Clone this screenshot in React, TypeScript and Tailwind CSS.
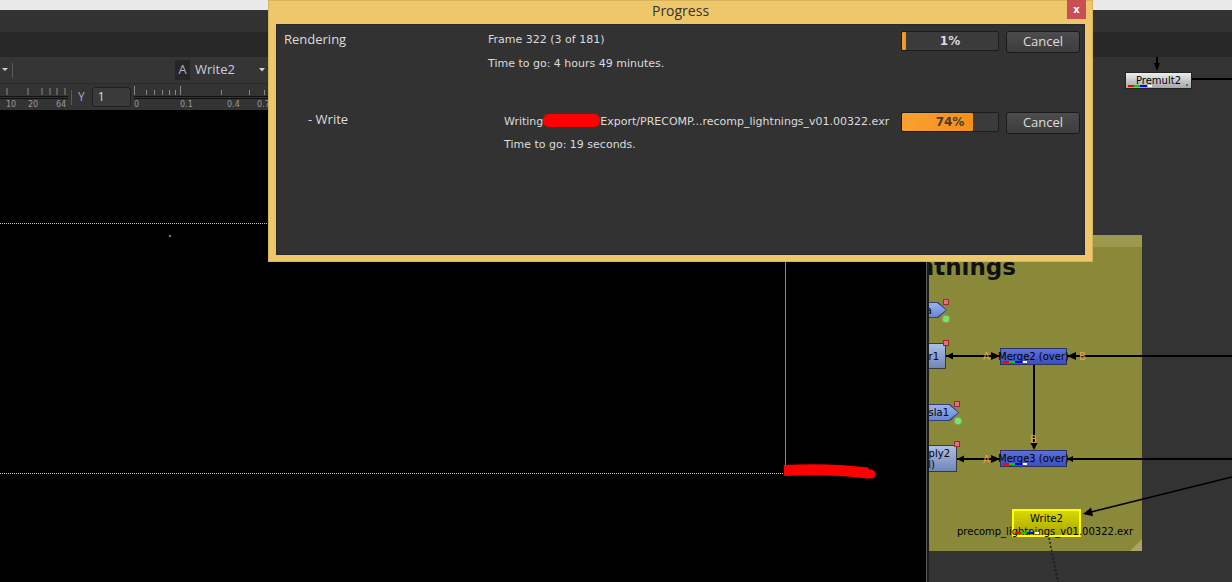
import React from "react";

const dv = "font-['DejaVu_Sans',sans-serif]";

function Channels({ className }: { className?: string }) {
  return (
    <div className={`absolute flex h-[2px] ${className ?? ""}`}>
      <div className="w-[6px] bg-[#ff0000]" />
      <div className="w-[6px] bg-[#00d000]" />
      <div className="w-[7px] bg-[#0000ff]" />
      <div className="ml-[1px] w-[4px] bg-white" />
    </div>
  );
}

function RedPin({ className }: { className: string }) {
  return (
    <div
      className={`absolute h-[6px] w-[6px] border border-[#9a2a3a] bg-[#e4707c] ${className}`}
    />
  );
}

function GreenDot({ className }: { className: string }) {
  return (
    <div
      className={`absolute h-[6px] w-[6px] rounded-full bg-[#6fe86f] shadow-[0_0_2px_#9f9] ${className}`}
    />
  );
}

function ViewerPanel() {
  return (
    <div className="flex w-[926px] shrink-0 flex-col">
      {/* toolbar */}
      <div className="flex h-[26px] shrink-0 items-center bg-[#353535]">
        <svg width="8" height="6" className="ml-[2px]">
          <path d="M0 1 L6 1 L3 4 Z" fill="#d0d0d0" />
        </svg>
        <div className="ml-[2px] h-[15px] w-px bg-[#5a5a5a]" />
        <div className="ml-[162px] flex h-[20px] w-[15px] items-center justify-center bg-[#262626] text-[13px] text-[#a9b6d0]">
          A
        </div>
        <div className="flex h-[20px] w-[80px] items-center justify-between pl-[5px] pr-[5px]">
          <span className="text-[13px] text-[#c8cedc]">Write2</span>
          <svg width="6" height="4">
            <path d="M0 0 L6 0 L3 3.5 Z" fill="#d0d0d0" />
          </svg>
        </div>
      </div>

      {/* ruler row */}
      <div className="relative flex h-[27px] shrink-0 items-center border-t border-[#2a2a2a] bg-[#333]">
        <svg width="68" height="26" className="shrink-0" fontFamily="DejaVu Sans, sans-serif">
          {[7, 28, 42, 50, 57, 65].map((x) => (
            <line key={x} x1={x} y1={4} x2={x} y2={11} stroke="#8a8a8a" strokeWidth="1" />
          ))}
          <line x1="0" y1="12.5" x2="68" y2="12.5" stroke="#111" strokeWidth="1.2" />
          <line x1="0" y1="14.5" x2="68" y2="14.5" stroke="#111" strokeWidth="1.2" />
          <text x="6" y="23" fontSize="8" fill="#9a9a9a">10</text>
          <text x="28" y="23" fontSize="8" fill="#9a9a9a">20</text>
          <text x="56" y="23" fontSize="8" fill="#9a9a9a">64</text>
        </svg>
        <div className="ml-[3px] h-[15px] w-px bg-[#5a5a5a]" />
        <span className="ml-[6px] text-[12px] text-[#9fb0c8]">Y</span>
        <div className="ml-[7px] flex h-[20px] w-[39px] items-center rounded-[3px] border border-[#1e1e1e] bg-[#3a3a3a] pl-[5px] text-[12px] text-[#ddd]">
          1
        </div>
        <svg width="140" height="26" className="ml-[3px] shrink-0" fontFamily="DejaVu Sans, sans-serif">
          {[0, 12, 20, 28, 35, 41, 87, 115, 130].map((x) => (
            <line key={x} x1={x + 0.5} y1={6} x2={x + 0.5} y2={11} stroke="#8a8a8a" strokeWidth="1" />
          ))}
          <line x1="0.5" y1="2" x2="0.5" y2="11" stroke="#8a8a8a" />
          <line x1="46.5" y1="2" x2="46.5" y2="11" stroke="#8a8a8a" />
          <line x1="0" y1="12.5" x2="140" y2="12.5" stroke="#111" strokeWidth="1.2" />
          <line x1="0" y1="14.5" x2="140" y2="14.5" stroke="#111" strokeWidth="1.2" />
          <text x="0" y="23" fontSize="8" fill="#9a9a9a">0</text>
          <text x="46" y="23" fontSize="8" fill="#9a9a9a">0.1</text>
          <text x="93" y="23" fontSize="8" fill="#9a9a9a">0.4</text>
          <text x="123" y="23" fontSize="8" fill="#9a9a9a">0.7</text>
        </svg>
      </div>

      {/* viewer */}
      <div className="relative flex-1 overflow-hidden bg-black">
        <div className="absolute left-0 top-[113px] w-[785px] border-t border-dotted border-[#c8c8c8]" />
        <div className="absolute left-0 top-[363px] w-[785px] border-t border-dotted border-[#c8c8c8]" />
        <div className="absolute left-[785px] top-[113px] h-[251px] w-px bg-[#8c8c8c]" />
        <div className="absolute left-[169px] top-[125px] h-[2px] w-[2px] bg-[#6a7a8c]" />
        <svg className="absolute left-[780px] top-[350px]" width="100" height="24">
          <path d="M4 10.5 Q 48 8 88 13" stroke="#ff0000" strokeWidth="11" fill="none" />
          <path d="M86 13.5 L91 14" stroke="#ff0000" strokeWidth="9" strokeLinecap="round" />
        </svg>
      </div>
    </div>
  );
}

function NodeGraph() {
  const arrowShape =
    "[clip-path:polygon(0_0,calc(100%-9px)_0,100%_50%,calc(100%-9px)_100%,0_100%)]";
  return (
    <div className={`relative flex-1 overflow-hidden bg-[#333] ${dv}`}>
      {/* backdrop */}
      <div className="absolute left-[-300px] top-[178px] h-[316px] w-[513px] bg-[#8a893a]">
        <div className="h-[12px] bg-[#9a994d]" />
        <div className="absolute bottom-0 right-0 h-[12px] w-[12px] bg-[#a7a664] [clip-path:polygon(100%_0,100%_100%,0_100%)]" />
      </div>
      <div className="absolute left-[-213px] top-[199px] w-[300px] whitespace-nowrap text-right text-[23px] font-bold leading-none text-[#111]">
        lightnings
      </div>

      {/* wires */}
      <svg className="absolute left-0 top-0" width="303" height="525" fontFamily="DejaVu Sans, sans-serif">
        <line x1="228" y1="0" x2="228" y2="8" stroke="#000" strokeWidth="2" />
        <polygon points="225,6 231,6 228,14" fill="#000" />
        <line x1="262" y1="22" x2="303" y2="22" stroke="#000" strokeWidth="2" />

        <line x1="17" y1="299" x2="303" y2="299" stroke="#000" strokeWidth="2" />
        <polygon points="17,299 24,295.5 24,302.5" fill="#000" />
        <polygon points="71,299 62,295 62,303" fill="#000" />
        <polygon points="138,299 147,295 147,303" fill="#000" />
        <text x="54" y="303" fontSize="10" fill="#e8a048">A</text>
        <text x="150" y="303" fontSize="10" fill="#e8a048">B</text>

        <line x1="105" y1="308" x2="105" y2="388" stroke="#000" strokeWidth="2" />
        <polygon points="101.5,386 108.5,386 105,393" fill="#000" />
        <text x="101" y="386" fontSize="10" fill="#e8a048">B</text>

        <line x1="28" y1="402" x2="303" y2="402" stroke="#000" strokeWidth="2" />
        <polygon points="28,402 35,398.5 35,405.5" fill="#000" />
        <polygon points="71,402 62,398 62,406" fill="#000" />
        <polygon points="138,402 144,399 144,405" fill="#000" />
        <text x="54" y="406" fontSize="10" fill="#e8a048">A</text>

        <line x1="303" y1="420" x2="160" y2="455.5" stroke="#000" strokeWidth="1.6" />
        <polygon points="154,457 164.2,459.2 162,450.6" fill="#000" />

        <line x1="120" y1="481" x2="129" y2="525" stroke="#1a1a1a" strokeWidth="1.5" strokeDasharray="2 2" />
      </svg>

      {/* Premult2 */}
      <div className="absolute left-[196px] top-[15px] flex h-[17px] w-[67px] items-center justify-center border border-[#222] bg-linear-to-b from-[#ededed] to-[#a6a6a6] text-[10px] text-black">
        Premult2
        <Channels className="bottom-[1px] left-[2px]" />
        <div className="absolute bottom-[2px] right-[3px] h-[2px] w-[2px] bg-[#2a9a2a]" />
      </div>

      {/* input nodes, partly scrolled out on the left */}
      <div className={`absolute left-[-40px] top-[245px] h-[16px] w-[58px] bg-[#33407a] ${arrowShape}`}>
        <div className={`absolute inset-[1px] flex items-center justify-end bg-linear-to-b from-[#9ab2ee] to-[#6a86cf] pr-[14px] text-[10px] text-black ${arrowShape}`}>
          a
        </div>
      </div>
      <RedPin className="left-[14px] top-[242px]" />
      <GreenDot className="left-[14px] top-[259px]" />

      <div className="absolute left-[-40px] top-[286px] flex h-[26px] w-[57px] items-center justify-end border border-[#3a3a3a] bg-linear-to-b from-[#adbfe6] to-[#7187b6] pr-[6px] text-[10px] text-black">
        r1
      </div>
      <RedPin className="left-[14px] top-[283px]" />

      <div className={`absolute left-[-30px] top-[347px] h-[17px] w-[60px] bg-[#33407a] ${arrowShape}`}>
        <div className={`absolute inset-[1px] flex items-center justify-end bg-linear-to-b from-[#9ab2ee] to-[#6a86cf] pr-[9px] text-[10px] text-black ${arrowShape}`}>
          sla1
        </div>
      </div>
      <RedPin className="left-[25px] top-[344px]" />
      <GreenDot className="left-[26px] top-[361px]" />

      <div className="absolute left-[-50px] top-[388px] flex h-[27px] w-[78px] flex-col items-end justify-center border border-[#3a3a3a] bg-linear-to-b from-[#adbfe6] to-[#7187b6] text-[10px] leading-[11px] text-black">
        <span className="pr-[6px]">ply2</span>
        <span className="pr-[21px]">(all)</span>
      </div>
      <RedPin className="left-[25px] top-[384px]" />

      {/* merges */}
      <div className="absolute left-[71px] top-[291px] flex h-[17px] w-[67px] items-center justify-center whitespace-nowrap border border-[#2c3262] bg-linear-to-b from-[#5b6fe0] to-[#3e4fbb] text-[10px] text-black">
        Merge2 (over)
        <Channels className="bottom-[1px] left-[2px]" />
      </div>
      <div className="absolute left-[71px] top-[393px] flex h-[17px] w-[67px] items-center justify-center whitespace-nowrap border border-[#2c3262] bg-linear-to-b from-[#5b6fe0] to-[#3e4fbb] text-[10px] text-black">
        Merge3 (over)
        <Channels className="bottom-[1px] left-[2px]" />
      </div>

      {/* Write2 */}
      <div className="absolute left-[83px] top-[452px] flex h-[28px] w-[69px] justify-center border-2 border-[#ffff00] bg-linear-to-b from-[#d8d800] to-[#a8a800] pt-[2px] text-[10px] leading-[12px] text-black">
        Write2
      </div>
      <div className="absolute left-[28px] top-[469px] whitespace-nowrap text-[10px] leading-[12px] text-black">
        precomp_lightnings_v01.00322.exr
      </div>
      <Channels className="left-[86px] top-[475px]" />
    </div>
  );
}

function ProgressBar({ pct, label, dark }: { pct: number; label: string; dark?: boolean }) {
  return (
    <div className="relative flex h-[20px] w-[98px] shrink-0 items-center justify-center overflow-hidden rounded-[2px] border border-[#1b1b1b] bg-[#3b3b3b]">
      <div
        className="absolute inset-y-0 left-0 rounded-[1px] bg-linear-to-r from-[#f8a030] to-[#f4901a]"
        style={{ width: `${pct}%` }}
      />
      <span
        className={`relative ${dv} text-[12px] font-bold ${dark ? "text-[#4a3a28]" : "text-[#dcdcdc]"}`}
      >
        {label}
      </span>
    </div>
  );
}

function CancelButton() {
  return (
    <div className="ml-[7px] flex h-[22px] w-[74px] shrink-0 items-center justify-center rounded-[3px] border border-[#1a1a1a] bg-linear-to-b from-[#4c4c4c] to-[#3d3d3d] text-[13px] text-[#dedede]">
      Cancel
    </div>
  );
}

function ProgressDialog() {
  return (
    <div className="absolute left-[268px] top-0 z-10 flex h-[262px] w-[825px] flex-col border border-[#d8b25c] bg-[#efc76b]">
      <div className="relative flex h-[23px] shrink-0 items-start justify-center">
        <span className="text-[14px] leading-[19px] text-[#333]">Progress</span>
        <div className={`absolute right-[6px] top-[-1px] flex h-[19px] w-[19px] items-center justify-center bg-[#c94f55] ${dv} text-[10px] font-bold text-white`}>
          x
        </div>
      </div>
      <div className="mx-[7px] mb-[6px] flex-1 border border-[#2a2a2a] bg-[#323232]">
        <div className="mt-[6px] flex h-[81px] items-start">
          <div className="w-[211px] shrink-0 pl-[7px] text-[13px] leading-[18px] text-[#dcdcdc] -mt-[1px]">
            Rendering
          </div>
          <div className={`mt-[1px] flex w-[413px] shrink-0 flex-col gap-[8px] ${dv} text-[11px] leading-[16px] text-[#dcdcdc]`}>
            <span>Frame 322 (3 of 181)</span>
            <span>Time to go: 4 hours 49 minutes.</span>
          </div>
          <ProgressBar pct={4} label="1%" />
          <CancelButton />
        </div>
        <div className="flex items-start">
          <div className="w-[227px] shrink-0 pl-[31px] text-[13px] leading-[18px] text-[#dcdcdc] -mt-[2px]">
            - Write
          </div>
          <div className={`flex w-[397px] shrink-0 flex-col gap-[7px] ${dv} text-[11px] leading-[16px] text-[#dcdcdc]`}>
            <span className="whitespace-nowrap">
              Writing
              <span className="inline-block h-[13px] w-[57px] translate-y-[2px] rounded-[6px] bg-[#ff0000] align-baseline" />
              Export/PRECOMP...recomp_lightnings_v01.00322.exr
            </span>
            <span>Time to go: 19 seconds.</span>
          </div>
          <ProgressBar pct={74} label="74%" dark />
          <CancelButton />
        </div>
      </div>
    </div>
  );
}

export default function App() {
  return (
    <div className="relative flex h-[582px] w-[1232px] flex-col overflow-hidden bg-[#333] font-['Open_Sans',sans-serif]">
      <div className="h-[10px] shrink-0 bg-[#e9e9e9]" />
      <div className="h-[22px] shrink-0 bg-[#323232]" />
      <div className="h-[25px] shrink-0 bg-[#282828]" />
      <div className="flex min-h-0 flex-1">
        <ViewerPanel />
        <div className="w-[3px] shrink-0 border-l border-[#5c5c5c] bg-[#1c1c1c]" />
        <NodeGraph />
      </div>
      <ProgressDialog />
    </div>
  );
}
